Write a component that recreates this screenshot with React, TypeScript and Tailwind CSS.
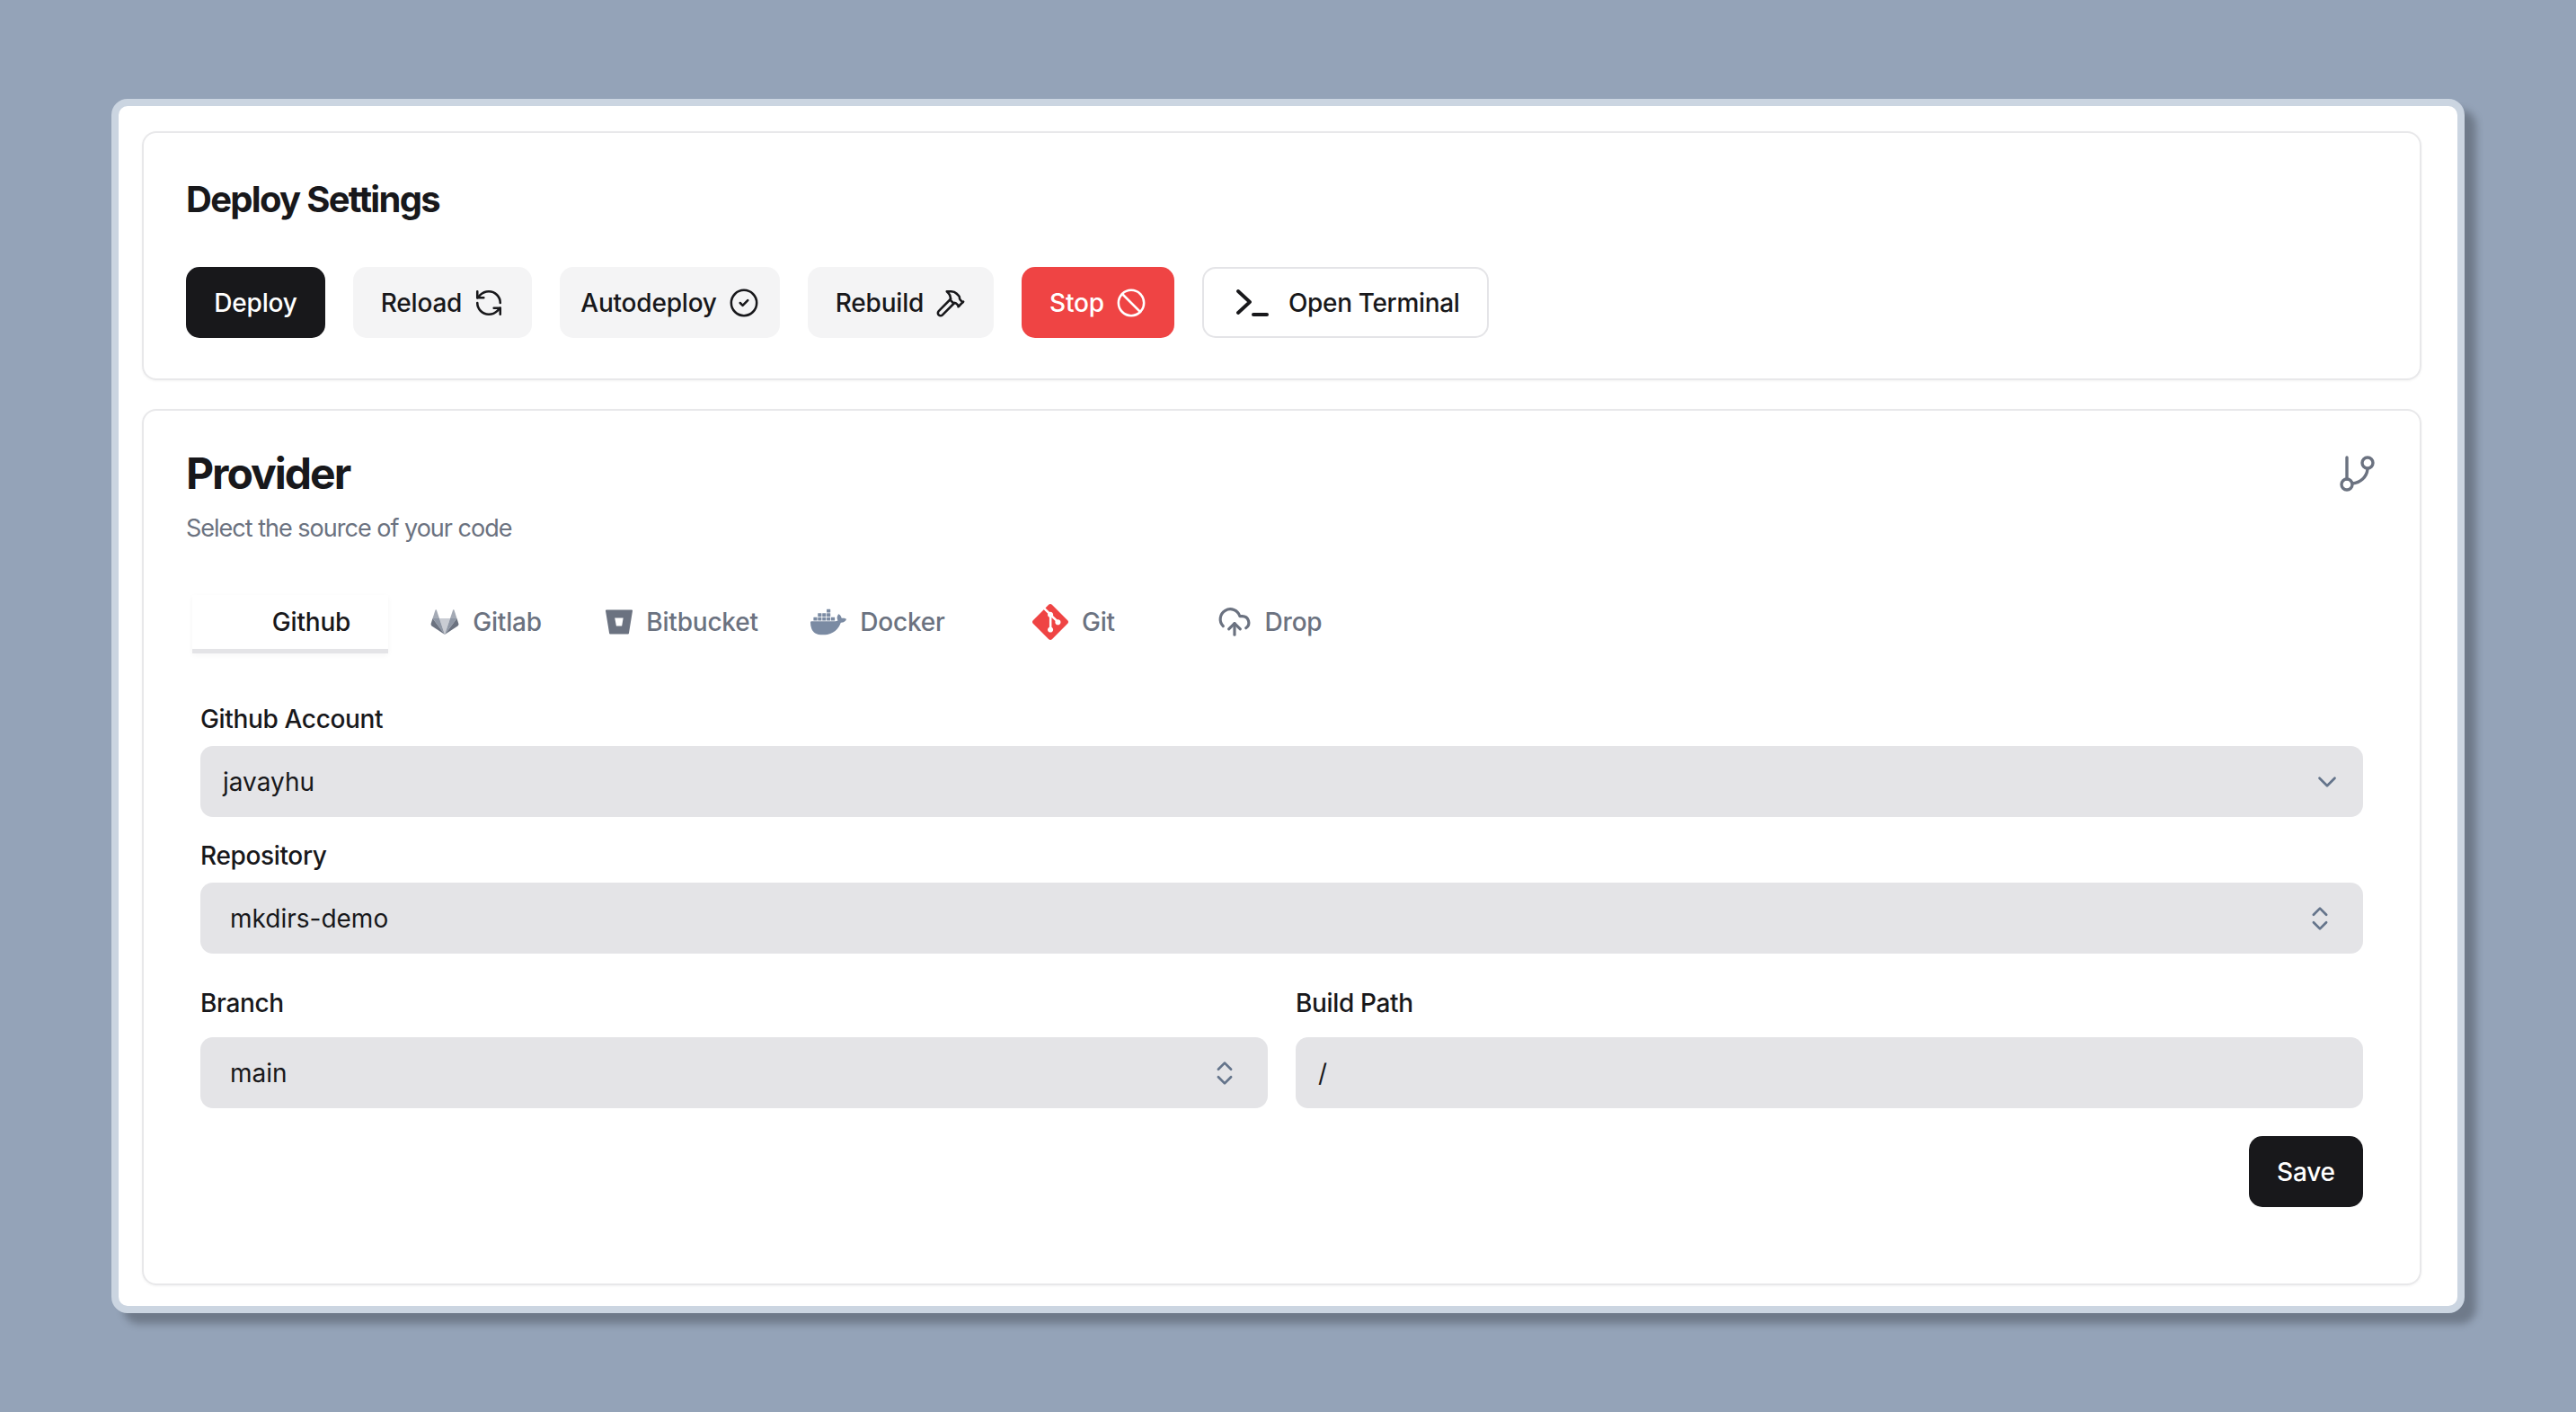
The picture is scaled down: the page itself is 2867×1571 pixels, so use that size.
import type { ReactNode } from "react";
import { CircleCheck, RefreshCcw, Hammer, Ban, ChevronDown, ChevronsUpDown, CloudUpload } from "lucide-react";
import { SiBitbucket, SiDocker, SiGit, SiGithub } from "react-icons/si";

function GitlabIcon() {
  return (
    <svg viewBox="0 0 32 28" className="w-[32px] h-[28px]">
      <path d="M16 28 L22 10 H10 Z" fill="#c9ccd3" />
      <path d="M16 28 L10 10 H2.5 Z" fill="#8f97a5" />
      <path d="M16 28 L22 10 H29.5 Z" fill="#8f97a5" />
      <path d="M2.5 10 L0.6 16 Q0.3 17.5 1.6 18.4 L16 28 Z" fill="#6b7280" />
      <path d="M29.5 10 L31.4 16 Q31.7 17.5 30.4 18.4 L16 28 Z" fill="#6b7280" />
      <path d="M2.5 10 H10 L6.8 0.6 Q6.2 -0.2 5.6 0.6 Z" fill="#a4aab5" />
      <path d="M29.5 10 H22 L25.2 0.6 Q25.8 -0.2 26.4 0.6 Z" fill="#a4aab5" />
    </svg>
  );
}

function BranchIcon() {
  return (
    <svg viewBox="0 0 40 42" fill="none" stroke="#6b7280" strokeWidth="3.4" strokeLinecap="round" className="w-[40px] h-[42px]">
      <path d="M9 2 V26" />
      <circle cx="9" cy="32" r="6" />
      <circle cx="32" cy="8" r="6" />
      <path d="M32 15 C31 24 24 30 15 31" />
    </svg>
  );
}

function TerminalIcon() {
  return (
    <svg viewBox="0 0 36 30" fill="none" stroke="#18181b" strokeLinecap="round" strokeLinejoin="round" className="w-[36px] h-[30px]">
      <path d="M2 2 L15 14 L2 26" strokeWidth="3.8" />
      <path d="M19 28 H34" strokeWidth="4" />
    </svg>
  );
}

function ActionButton({ label, icon, className }: { label: string; icon?: ReactNode; className: string }) {
  return (
    <button className={`h-[79px] rounded-[15px] flex items-center justify-center text-[28px] font-medium tracking-[-0.2px] ${className}`}>
      {label}
      {icon}
    </button>
  );
}

function Tab({ label, icon, active }: { label: string; icon: ReactNode; active?: boolean }) {
  return (
    <div className={`h-[65px] flex items-center justify-center gap-[15px] text-[28px] font-medium tracking-[-0.2px] border-b-[5px] ${active ? "border-[#e4e4e7] text-[#18181b] shadow-[0_2px_6px_rgba(0,0,0,0.04)]" : "border-transparent text-[#6b7280]"}`}>
      {icon}
      {label}
    </div>
  );
}

function Field({ label, children, className, labelGap = "mb-[13px]" }: { label: string; children: ReactNode; className?: string; labelGap?: string }) {
  return (
    <div className={className}>
      <div className={`h-[34px] flex items-center text-[28px] font-medium tracking-[-0.35px] text-[#18181b] ${labelGap}`}>{label}</div>
      {children}
    </div>
  );
}

function Box({ text, icon, pad }: { text: string; icon?: ReactNode; pad: string }) {
  return (
    <div className={`h-[79px] rounded-[14px] bg-[#e4e4e7] flex items-center justify-between text-[28px] text-[#18181b] ${pad}`}>
      {text}
      {icon}
    </div>
  );
}

export default function App() {
  return (
    <div className="min-h-screen bg-[#94a3b8] pt-[110px] pl-[124px] font-['Inter',sans-serif]">
      <div className="w-[2619px] h-[1351px] bg-white border-[8px] border-[#cbd5e1] rounded-[18px] shadow-[13px_12px_8px_rgba(0,0,0,0.25)] pt-[28px] pl-[26px] pr-[40px]">
        <div className="h-[277px] border-2 border-[#e8e8ea] rounded-[16px] px-[47px] pt-[44px] shadow-[0_1px_3px_rgba(0,0,0,0.05)]">
          <h2 className="text-[40px] leading-[60px] font-bold text-[#18181b] tracking-[-1.7px]">Deploy Settings</h2>
          <div className="flex gap-[31px] mt-[45px]">
            <ActionButton label="Deploy" className="w-[155px] bg-[#18181b] text-white" />
            <ActionButton label="Reload" icon={<RefreshCcw className="w-[34px] h-[34px] ml-[13px]" strokeWidth={1.8} />} className="w-[199px] bg-[#f4f4f5] text-[#18181b]" />
            <ActionButton label="Autodeploy" icon={<CircleCheck className="w-[34px] h-[34px] ml-[13px]" strokeWidth={1.8} />} className="w-[245px] bg-[#f4f4f5] text-[#18181b]" />
            <ActionButton label="Rebuild" icon={<Hammer className="w-[34px] h-[34px] ml-[13px]" strokeWidth={1.8} />} className="w-[207px] bg-[#f4f4f5] text-[#18181b]" />
            <ActionButton label="Stop" icon={<Ban className="w-[34px] h-[34px] ml-[13px]" strokeWidth={1.8} />} className="w-[170px] bg-[#ef4444] text-white" />
            <button className="w-[319px] h-[79px] rounded-[15px] border-2 border-[#e4e4e7] flex items-center pl-[36px] gap-[22px] text-[28px] font-medium tracking-[-0.35px] text-[#18181b]">
              <TerminalIcon />
              Open Terminal
            </button>
          </div>
        </div>

        <div className="h-[975px] mt-[32px] border-2 border-[#e8e8ea] rounded-[16px] px-[47px] pt-[38px] shadow-[0_1px_3px_rgba(0,0,0,0.05)]">
          <div className="flex justify-between">
            <div>
              <h2 className="text-[48px] leading-[64px] font-bold text-[#18181b] tracking-[-2px]">Provider</h2>
              <p className="text-[27px] leading-[40px] text-[#6b7280] tracking-[-1px] mt-[9px]">Select the source of your code</p>
            </div>
            <div className="pt-[12px] pr-[3px]">
              <BranchIcon />
            </div>
          </div>

          <div className="grid grid-cols-[repeat(6,218px)] ml-[7px] mt-[54px]">
            <Tab active label="Github" icon={<SiGithub className="w-[32px] h-[32px] text-white" />} />
            <Tab label="Gitlab" icon={<GitlabIcon />} />
            <Tab label="Bitbucket" icon={<SiBitbucket className="w-[30px] h-[30px] text-[#6b7280]" />} />
            <Tab label="Docker" icon={<SiDocker className="w-[40px] h-[40px] text-[#7b8ba3]" />} />
            <Tab label="Git" icon={<SiGit className="w-[40px] h-[40px] text-[#ef4444]" />} />
            <Tab label="Drop" icon={<CloudUpload className="w-[38px] h-[38px] text-[#6b7280]" strokeWidth={2} />} />
          </div>

          <div className="mx-[16px] mt-[56px]">
            <Field label="Github Account">
              <Box text="javayhu" pad="pl-[25px] pr-[23px]" icon={<ChevronDown className="w-[34px] h-[34px] text-[#64748b]" strokeWidth={1.9} />} />
            </Field>
            <Field label="Repository" className="mt-[26px]">
              <Box text="mkdirs-demo" pad="pl-[33px] pr-[31px]" icon={<ChevronsUpDown className="w-[34px] h-[34px] text-[#64748b]" strokeWidth={1.9} />} />
            </Field>
            <div className="grid grid-cols-2 gap-[31px] mt-[38px]">
              <Field label="Branch" labelGap="mb-[21px]">
                <Box text="main" pad="pl-[33px] pr-[31px]" icon={<ChevronsUpDown className="w-[34px] h-[34px] text-[#64748b]" strokeWidth={1.9} />} />
              </Field>
              <Field label="Build Path" labelGap="mb-[21px]">
                <Box text="/" pad="pl-[25px]" />
              </Field>
            </div>
            <div className="flex justify-end mt-[31px]">
              <ActionButton label="Save" className="w-[127px] bg-[#18181b] text-white" />
            </div>
          </div>
        </div>
      </div>
    </div>
  );
}
